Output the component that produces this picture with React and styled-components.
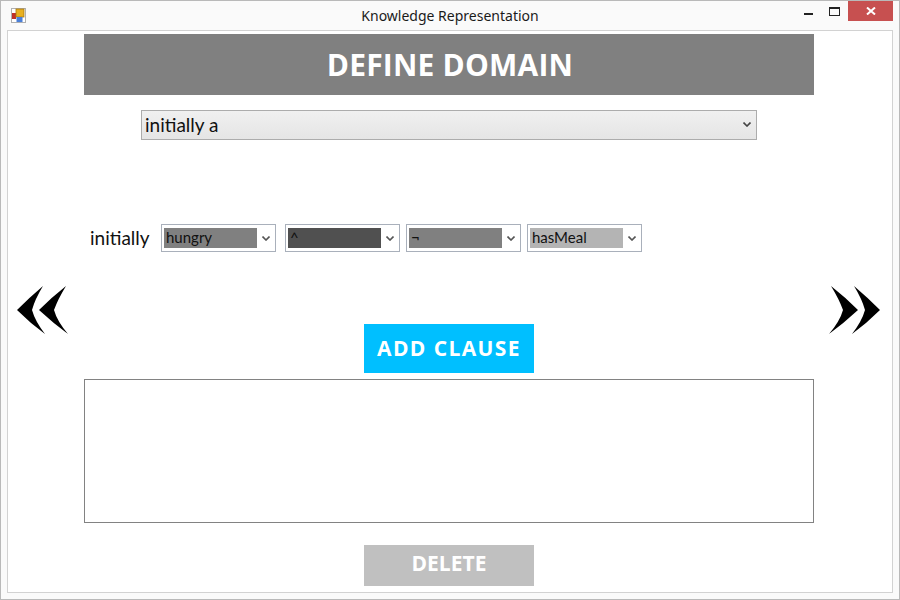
import React from "react";
import styled, { createGlobalStyle } from "styled-components";

const Global = createGlobalStyle`
  html, body { margin: 0; padding: 0; background: #fafafa; }
  body { font-family: "Open Sans", "Liberation Sans", sans-serif; }
  * { box-sizing: border-box; }
`;

const Window = styled.div`
  width: 900px;
  height: 600px;
  border: 1px solid #b9b9b9;
  background: #fafafa;
  display: flex;
  flex-direction: column;
  padding: 0 6px 6px 6px;
`;

const TitleBar = styled.div`
  height: 29px;
  display: grid;
  grid-template-columns: 1fr auto 1fr;
  align-items: start;
  margin: 0 -6px;
`;

const AppIcon = styled.svg`
  margin: 7px 0 0 10px;
`;

const Title = styled.div`
  font-family: "Noto Sans", "Open Sans", sans-serif;
  font-size: 14px;
  color: #1a1a1a;
  padding-top: 5px;
  white-space: nowrap;
`;

const Controls = styled.div`
  justify-self: end;
  display: flex;
  align-items: flex-start;
  margin-right: 6px;
`;

const CtrlBtn = styled.div`
  width: ${(p) => p.$w}px;
  height: 20px;
  display: flex;
  align-items: center;
  justify-content: center;
  background: ${(p) => p.$bg || "transparent"};
`;

const Client = styled.div`
  flex: 1;
  border: 1px solid #d2d2d2;
  background: #ffffff;
  display: grid;
  grid-template-columns: 76px 730px 1fr;
`;

const Side = styled.div`
  padding-top: 255px;
  display: flex;
  padding-left: ${(p) => p.$pl}px;
`;

const Center = styled.div`
  display: flex;
  flex-direction: column;
  padding-top: 3px;
`;

const Header = styled.div`
  height: 61px;
  background: #808080;
  color: #ffffff;
  font-family: "Open Sans", sans-serif;
  font-weight: 700;
  font-size: 30px;
  display: flex;
  align-items: center;
  justify-content: center;
  padding-left: 2px;
  letter-spacing: 0.2px;
`;

const MainSelect = styled.div`
  margin: 15px 0 0 57px;
  width: 616px;
  height: 30px;
  border: 1px solid #acacac;
  background: linear-gradient(#f0f0f0, #e5e5e5);
  display: flex;
  align-items: center;
  justify-content: space-between;
  padding: 0 5px 2px 3px;
  font-family: "Lato", "Open Sans", sans-serif;
  font-size: 19px;
  color: #111;
`;

const ClauseRow = styled.div`
  margin: 84px 0 0 6px;
  display: flex;
  align-items: center;
  gap: 6px;
`;

const Label = styled.div`
  font-family: "Lato", "Open Sans", sans-serif;
  font-size: 19px;
  color: #111;
  width: 65px;
  padding-bottom: 2px;
`;

const Combo = styled.div`
  width: 115px;
  height: 28px;
  border: 1px solid #a9b0bb;
  background: #fff;
  display: flex;
  align-items: center;
  padding: 3px 0 3px 2px;
  margin-right: ${(p) => p.$mr || 0}px;
`;

const ComboValue = styled.div`
  width: 93px;
  height: 100%;
  background: ${(p) => p.$bg};
  font-family: "Lato", "Open Sans", sans-serif;
  font-size: 15px;
  line-height: 19px;
  color: #111;
  padding-left: 2px;
  white-space: nowrap;
  overflow: hidden;
`;

const ComboArrow = styled.div`
  flex: 1;
  display: flex;
  justify-content: center;
  align-items: center;
`;

const ActionButton = styled.div`
  margin: ${(p) => p.$mt}px 0 0 280px;
  width: 170px;
  height: ${(p) => p.$h}px;
  background: ${(p) => p.$bg};
  color: #ffffff;
  font-family: "Open Sans", sans-serif;
  font-weight: 700;
  font-size: 21px;
  letter-spacing: ${(p) => p.$ls || 0}px;
  display: flex;
  align-items: center;
  justify-content: center;
  padding-bottom: ${(p) => p.$pb || 0}px;
`;

const ClauseBox = styled.div`
  margin-top: 6px;
  height: 144px;
  border: 1px solid #828282;
  background: #fff;
`;

const Chevron = ({ color = "#555" }) => (
  <svg width="8" height="5" viewBox="0 0 8 5">
    <path d="M0.5 0.5 L4 4 L7.5 0.5" stroke={color} strokeWidth="1.6" fill="none" />
  </svg>
);

const DoubleArrow = ({ flip }) => (
  <svg
    width="52"
    height="48"
    viewBox="0 0 52 48"
    style={flip ? { transform: "scaleX(-1)" } : undefined}
  >
    <path d="M0 24 Q13 11 26 0 Q18 13 15 24 Q18 35 28 48 Q13 37 0 24 Z" fill="#000" />
    <path d="M22 24 Q35 11 49 0 Q41 13 37 24 Q40 35 51 48 Q36 37 22 24 Z" fill="#000" />
  </svg>
);

const combos = [
  { text: "hungry", bg: "#808080", mr: 3 },
  { text: "^", bg: "#505050" },
  { text: "¬", bg: "#808080" },
  { text: "hasMeal", bg: "#b4b4b4" },
];

export default function App() {
  return (
    <>
      <Global />
      <Window>
        <TitleBar>
          <AppIcon width="15" height="15" viewBox="0 0 15 15">
            <rect x="0.5" y="0.5" width="14" height="14" fill="#fff" stroke="#b0b0b0" />
            <rect x="1" y="5" width="4" height="6" fill="#c0302a" />
            <rect x="5" y="1" width="8" height="8" fill="#e8b020" stroke="#a87810" strokeWidth="0.8" />
            <rect x="5.5" y="9" width="6" height="5" fill="#4a7fd8" />
          </AppIcon>
          <Title>Knowledge Representation</Title>
          <Controls>
            <CtrlBtn $w={26}>
              <svg width="9" height="10" viewBox="0 0 9 10">
                <rect x="0" y="7" width="9" height="2" fill="#222" />
              </svg>
            </CtrlBtn>
            <CtrlBtn $w={27}>
              <svg width="11" height="9" viewBox="0 0 11 9">
                <rect x="0.5" y="0.5" width="10" height="8" fill="none" stroke="#222" />
                <rect x="0" y="0" width="11" height="2" fill="#222" />
              </svg>
            </CtrlBtn>
            <CtrlBtn $w={45} $bg="#c75050">
              <svg width="10" height="8" viewBox="0 0 10 8">
                <path d="M1 0.5 L9 7.5 M9 0.5 L1 7.5" stroke="#fff" strokeWidth="2" />
              </svg>
            </CtrlBtn>
          </Controls>
        </TitleBar>
        <Client>
          <Side $pl={9}>
            <DoubleArrow />
          </Side>
          <Center>
            <Header>DEFINE DOMAIN</Header>
            <MainSelect>
              <span>initially a</span>
              <Chevron color="#444" />
            </MainSelect>
            <ClauseRow>
              <Label>initially</Label>
              {combos.map((c, i) => (
                <Combo key={i} $mr={c.mr}>
                  <ComboValue $bg={c.bg}>{c.text}</ComboValue>
                  <ComboArrow>
                    <Chevron />
                  </ComboArrow>
                </Combo>
              ))}
            </ClauseRow>
            <ActionButton $mt={72} $h={49} $bg="#00bfff" $ls={1.4} $pb={2}>
              ADD CLAUSE
            </ActionButton>
            <ClauseBox />
            <ActionButton $mt={22} $h={41} $bg="#c0c0c0" $pb={5}>
              DELETE
            </ActionButton>
          </Center>
          <Side $pl={14}>
            <DoubleArrow flip />
          </Side>
        </Client>
      </Window>
    </>
  );
}
